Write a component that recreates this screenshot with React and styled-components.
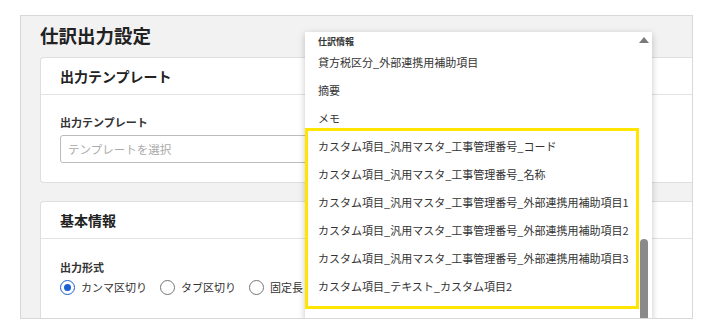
import React from 'react'
import styled, { createGlobalStyle } from 'styled-components'

const GlobalStyle = createGlobalStyle`
  body {
    margin: 0;
    background: #fff;
    font-family: "Noto Sans CJK JP", "Noto Sans", sans-serif;
    color: #333;
  }
`

const Frame = styled.div`
  position: relative;
  box-sizing: border-box;
  margin: 15px 0 0 20px;
  width: 673px;
  height: 304px;
  border: 1px solid #d8d8d8;
  background: #f2f2f2;
  overflow: hidden;
  padding-left: 19px;
`

const PageTitle = styled.h1`
  margin: 0 0 8px;
  padding-top: 5px;
  font-size: 18.5px;
  line-height: 28px;
  font-weight: 700;
  color: #222;
`

const Card = styled.section`
  background: #fff;
  border: 1px solid #dedede;
  border-right: none;
  border-radius: 4px 0 0 4px;
  margin-bottom: 18px;
`

const CardHeader = styled.div`
  height: 36px;
  display: flex;
  align-items: center;
  padding-left: 19px;
  border-bottom: 1px solid #e2e2e2;
  font-size: 14px;
  font-weight: 700;
  color: #222;
`

const CardBody = styled.div`
  padding: ${p => p.pad || '19px 19px 19px'};
`

const FieldLabel = styled.div`
  font-size: 11px;
  line-height: 16px;
  font-weight: 700;
  color: #333;
`

const Input = styled.div`
  box-sizing: border-box;
  margin-top: 5px;
  width: 420px;
  height: 28px;
  border: 1px solid #bcbcbc;
  border-radius: 3px;
  display: flex;
  align-items: center;
  padding-left: 7px;
  font-size: 11.5px;
  color: #aaa;
`

const RadioRow = styled.div`
  display: flex;
  align-items: center;
  gap: 13px;
  margin-top: 3px;
  height: 18px;
`

const RadioItem = styled.label`
  display: flex;
  align-items: center;
  gap: 6px;
  font-size: 11px;
  color: #333;
`

const RadioCircle = styled.span`
  box-sizing: border-box;
  width: 15px;
  height: 15px;
  border-radius: 50%;
  border: 1.5px solid ${p => (p.checked ? '#1c5fd1' : '#777')};
  display: flex;
  align-items: center;
  justify-content: center;
  &::after {
    content: '';
    width: 7px;
    height: 7px;
    border-radius: 50%;
    background: ${p => (p.checked ? '#1c5fd1' : 'transparent')};
  }
`

const Dropdown = styled.div`
  position: absolute;
  left: 284px;
  top: 16px;
  width: 347px;
  height: 320px;
  background: #fff;
  box-shadow: 0 2px 7px rgba(0, 0, 0, 0.22);
  display: flex;
`

const OptionList = styled.div`
  flex: 1;
`

const GroupLabel = styled.div`
  padding: 4px 0 0 13px;
  height: 12px;
  font-size: 9px;
  line-height: 12px;
  font-weight: 700;
  color: #333;
`

const Option = styled.div`
  height: 28px;
  display: flex;
  align-items: center;
  padding-left: 13px;
  font-size: 11px;
  color: #333;
  white-space: nowrap;
`

const ScrollTrack = styled.div`
  width: 12px;
  display: flex;
  flex-direction: column;
  align-items: center;
  padding-right: 2px;
`

const ScrollArrow = styled.div`
  margin-top: 5px;
  width: 0;
  height: 0;
  border-left: 5px solid transparent;
  border-right: 5px solid transparent;
  border-bottom: 6px solid #7a7a7a;
`

const ScrollThumb = styled.div`
  margin-top: 196px;
  width: 8px;
  height: 120px;
  border-radius: 4px 4px 0 0;
  background: #8a8a8a;
`

const Highlight = styled.div`
  position: absolute;
  left: 0;
  top: 96px;
  box-sizing: border-box;
  width: 334px;
  height: 181px;
  border: 3px solid #ffe500;
  pointer-events: none;
`

const options = [
  '貸方税区分_外部連携用補助項目',
  '摘要',
  'メモ',
  'カスタム項目_汎用マスタ_工事管理番号_コード',
  'カスタム項目_汎用マスタ_工事管理番号_名称',
  'カスタム項目_汎用マスタ_工事管理番号_外部連携用補助項目1',
  'カスタム項目_汎用マスタ_工事管理番号_外部連携用補助項目2',
  'カスタム項目_汎用マスタ_工事管理番号_外部連携用補助項目3',
  'カスタム項目_テキスト_カスタム項目2',
]

const formats = [
  { label: 'カンマ区切り', checked: true },
  { label: 'タブ区切り' },
  { label: '固定長' },
]

export default function App() {
  return (
    <>
      <GlobalStyle />
      <Frame>
        <PageTitle>仕訳出力設定</PageTitle>
        <Card>
          <CardHeader>出力テンプレート</CardHeader>
          <CardBody>
            <FieldLabel>出力テンプレート</FieldLabel>
            <Input>テンプレートを選択</Input>
          </CardBody>
        </Card>
        <Card>
          <CardHeader>基本情報</CardHeader>
          <CardBody pad='20px 19px 30px'>
            <FieldLabel>出力形式</FieldLabel>
            <RadioRow>
              {formats.map(f => (
                <RadioItem key={f.label}>
                  <RadioCircle checked={f.checked} />
                  {f.label}
                </RadioItem>
              ))}
            </RadioRow>
          </CardBody>
        </Card>
        <Dropdown>
          <OptionList>
            <GroupLabel>仕訳情報</GroupLabel>
            {options.map(o => (
              <Option key={o}>{o}</Option>
            ))}
          </OptionList>
          <ScrollTrack>
            <ScrollArrow />
            <ScrollThumb />
          </ScrollTrack>
          <Highlight />
        </Dropdown>
      </Frame>
    </>
  )
}
